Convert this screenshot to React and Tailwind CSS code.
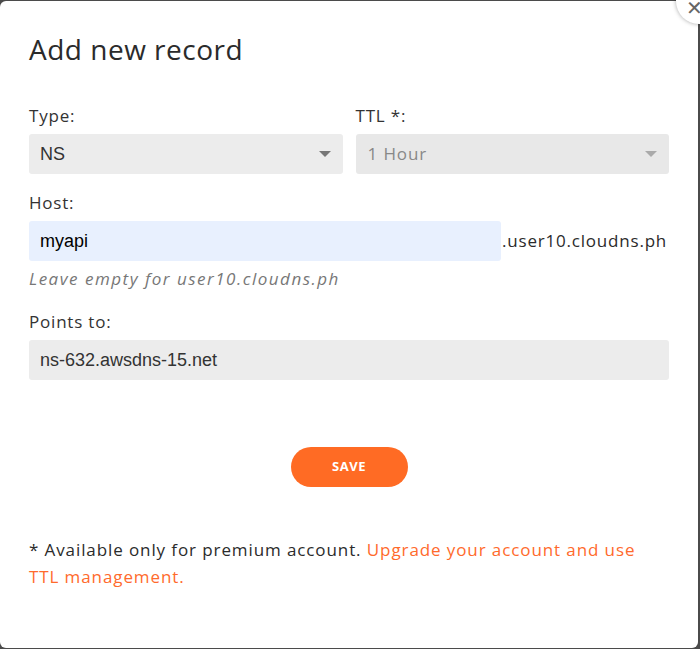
import React, { useState } from "react";

const Caret = ({ color = "#777" }) => (
  <svg width="12" height="6" viewBox="0 0 12 6">
    <path d="M0 0 L12 0 L6 6 Z" fill={color} />
  </svg>
);

const App = () => {
  const [host, setHost] = useState("myapi");
  const [points, setPoints] = useState("ns-632.awsdns-15.net");

  return (
    <div
      className="relative w-[700px] h-[649px] bg-[#4b4b4b] overflow-hidden"
      style={{ fontFamily: "'Open Sans', Lato, sans-serif" }}
    >
      {/* Modal */}
      <div className="w-[698px] h-[647px] mt-px bg-white rounded-[6px] px-[29px] pt-[31px] text-[#333]">
        <h2 className="text-[28px] leading-[34px] text-[#2b2b2b] tracking-[0.5px]">Add new record</h2>

        <div className="flex gap-[13px] mt-[39px]">
          <div className="flex-1">
            <div className="text-[17px] leading-[22px] mb-[7px] tracking-[0.8px]">Type:</div>
            <div className="h-[40px] rounded-[3px] bg-[#ececec] flex items-center justify-between pl-[11px] pr-[12px]">
              <span
                className="text-[18px] text-[#333]"
                style={{ fontFamily: "'Liberation Sans', Arial, sans-serif" }}
              >
                NS
              </span>
              <Caret color="#777" />
            </div>
          </div>
          <div className="flex-1">
            <div className="text-[17px] leading-[22px] mb-[7px] tracking-[0.8px]">TTL *:</div>
            <div className="h-[40px] rounded-[3px] bg-[#e8e8e8] flex items-center justify-between pl-[12px] pr-[12px]">
              <span className="text-[17px] text-[#888] tracking-[0.9px]">1 Hour</span>
              <Caret color="#aaa" />
            </div>
          </div>
        </div>

        <div className="mt-[18px]">
          <div className="text-[17px] leading-[22px] mb-[7px] tracking-[0.8px]">Host:</div>
          <div className="flex items-center">
            <input
              value={host}
              onChange={(e) => setHost(e.target.value)}
              className="w-[472px] h-[40px] rounded-[3px] bg-[#e8f0fe] px-[11px] text-[18px] text-black outline-none"
              style={{ fontFamily: "'Liberation Sans', Arial, sans-serif" }}
            />
            <span className="text-[17px] ml-px text-[#2b2b2b] tracking-[0.8px]">.user10.cloudns.ph</span>
          </div>
          <div className="text-[17px] italic text-[#777] mt-[6px] leading-[24px] tracking-[1.5px]">
            Leave empty for user10.cloudns.ph
          </div>
        </div>

        <div className="mt-[20px]">
          <div className="text-[17px] leading-[22px] mb-[7px] tracking-[0.8px]">Points to:</div>
          <input
            value={points}
            onChange={(e) => setPoints(e.target.value)}
            className="w-full h-[40px] rounded-[3px] bg-[#ececec] px-[11px] text-[18px] text-[#333] outline-none"
            style={{ fontFamily: "'Liberation Sans', Arial, sans-serif" }}
          />
        </div>

        <div className="flex justify-center mt-[67px]">
          <button className="w-[117px] h-[40px] rounded-full bg-[#ff6b24] text-white text-[13px] font-bold tracking-[0.5px]">
            SAVE
          </button>
        </div>

        <p className="mt-[49px] w-[625px] text-[17px] leading-[27px] text-[#2b2b2b] tracking-[0.9px]">
          * Available only for premium account.{" "}
          <a href="#" className="text-[#ff6a2c]">
            Upgrade your account and use TTL management.
          </a>
        </p>
      </div>

      {/* Close button */}
      <button className="absolute -top-[22px] left-[676px] w-[46px] h-[46px] rounded-full bg-white shadow-[0_0_4px_rgba(0,0,0,0.35)] flex items-center justify-center overflow-hidden">
        <span className="text-[#666] text-[20px] leading-none -translate-x-[5px] translate-y-[7px]">✕</span>
      </button>
    </div>
  );
};

export default App;
